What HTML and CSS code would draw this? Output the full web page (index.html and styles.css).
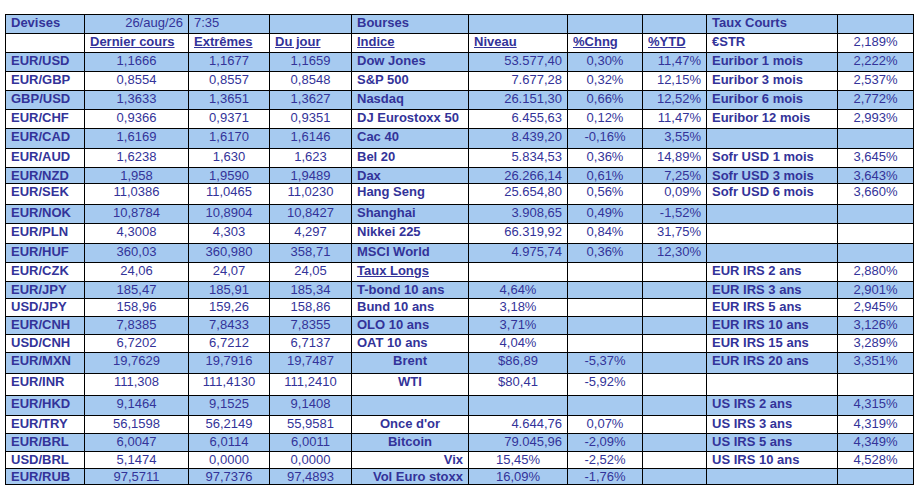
FILE: index.html
```html
<!DOCTYPE html>
<html lang="fr">
<head>
<meta charset="utf-8">
<title>Marchés</title>
<link rel="stylesheet" href="styles.css">
</head>
<body>
<table class="sheet">
  <colgroup>
    <col class="w79"><col class="w104"><col class="w81"><col class="w82"><col class="w117"><col class="w99"><col class="w75"><col class="w64"><col class="w131"><col class="w76">
  </colgroup>
  <tbody>
    <tr class="alt h19"><td class="b">Devises</td><td class="r">26/aug/26</td><td>7:35</td><td></td><td class="b">Bourses</td><td></td><td></td><td></td><td class="b">Taux Courts</td><td></td></tr>
    <tr class="h19"><td></td><td class="b u">Dernier cours</td><td class="b u">Extrêmes</td><td class="b u">Du jour</td><td class="b u">Indice</td><td class="b u">Niveau</td><td class="b u">%Chng</td><td class="b u">%YTD</td><td class="b">€STR</td><td class="c">2,189%</td></tr>
    <tr class="alt h19"><td class="b">EUR/USD</td><td class="c">1,1666</td><td class="c">1,1677</td><td class="c">1,1659</td><td class="b">Dow Jones</td><td class="r">53.577,40</td><td class="c">0,30%</td><td class="r">11,47%</td><td class="b">Euribor 1 mois</td><td class="c">2,222%</td></tr>
    <tr class="h19"><td class="b">EUR/GBP</td><td class="c">0,8554</td><td class="c">0,8557</td><td class="c">0,8548</td><td class="b">S&amp;P 500</td><td class="r">7.677,28</td><td class="c">0,32%</td><td class="r">12,15%</td><td class="b">Euribor 3 mois</td><td class="c">2,537%</td></tr>
    <tr class="alt h19"><td class="b">GBP/USD</td><td class="c">1,3633</td><td class="c">1,3651</td><td class="c">1,3627</td><td class="b">Nasdaq</td><td class="r">26.151,30</td><td class="c">0,66%</td><td class="r">12,52%</td><td class="b">Euribor 6 mois</td><td class="c">2,772%</td></tr>
    <tr class="h19"><td class="b">EUR/CHF</td><td class="c">0,9366</td><td class="c">0,9371</td><td class="c">0,9351</td><td class="b">DJ Eurostoxx 50</td><td class="r">6.455,63</td><td class="c">0,12%</td><td class="r">11,47%</td><td class="b">Euribor 12 mois</td><td class="c">2,993%</td></tr>
    <tr class="alt h20"><td class="b">EUR/CAD</td><td class="c">1,6169</td><td class="c">1,6170</td><td class="c">1,6146</td><td class="b">Cac 40</td><td class="r">8.439,20</td><td class="c">-0,16%</td><td class="r">3,55%</td><td></td><td></td></tr>
    <tr class="h19"><td class="b">EUR/AUD</td><td class="c">1,6238</td><td class="c">1,630</td><td class="c">1,623</td><td class="b">Bel 20</td><td class="r">5.834,53</td><td class="c">0,36%</td><td class="r">14,89%</td><td class="b">Sofr USD 1 mois</td><td class="c">3,645%</td></tr>
    <tr class="alt h16"><td class="b">EUR/NZD</td><td class="c">1,958</td><td class="c">1,9590</td><td class="c">1,9489</td><td class="b">Dax</td><td class="r">26.266,14</td><td class="c">0,61%</td><td class="r">7,25%</td><td class="b">Sofr USD 3 mois</td><td class="c">3,643%</td></tr>
    <tr class="h21"><td class="b">EUR/SEK</td><td class="c">11,0386</td><td class="c">11,0465</td><td class="c">11,0230</td><td class="b">Hang Seng</td><td class="r">25.654,80</td><td class="c">0,56%</td><td class="r">0,09%</td><td class="b">Sofr USD 6 mois</td><td class="c">3,660%</td></tr>
    <tr class="alt h19"><td class="b">EUR/NOK</td><td class="c">10,8784</td><td class="c">10,8904</td><td class="c">10,8427</td><td class="b">Shanghai</td><td class="r">3.908,65</td><td class="c">0,49%</td><td class="r">-1,52%</td><td></td><td></td></tr>
    <tr class="h20"><td class="b">EUR/PLN</td><td class="c">4,3008</td><td class="c">4,303</td><td class="c">4,297</td><td class="b">Nikkei 225</td><td class="r">66.319,92</td><td class="c">0,84%</td><td class="r">31,75%</td><td></td><td></td></tr>
    <tr class="alt h19"><td class="b">EUR/HUF</td><td class="c">360,03</td><td class="c">360,980</td><td class="c">358,71</td><td class="b">MSCI World</td><td class="r">4.975,74</td><td class="c">0,36%</td><td class="r">12,30%</td><td></td><td></td></tr>
    <tr class="h19"><td class="b">EUR/CZK</td><td class="c">24,06</td><td class="c">24,07</td><td class="c">24,05</td><td class="b u">Taux Longs</td><td></td><td></td><td></td><td class="b">EUR IRS 2 ans</td><td class="c">2,880%</td></tr>
    <tr class="alt h17"><td class="b">EUR/JPY</td><td class="c">185,47</td><td class="c">185,91</td><td class="c">185,34</td><td class="b">T-bond 10 ans</td><td class="c">4,64%</td><td></td><td></td><td class="b">EUR IRS 3 ans</td><td class="c">2,901%</td></tr>
    <tr class="h18"><td class="b">USD/JPY</td><td class="c">158,96</td><td class="c">159,26</td><td class="c">158,86</td><td class="b">Bund 10 ans</td><td class="c">3,18%</td><td></td><td></td><td class="b">EUR IRS 5 ans</td><td class="c">2,945%</td></tr>
    <tr class="alt h18"><td class="b">EUR/CNH</td><td class="c">7,8385</td><td class="c">7,8433</td><td class="c">7,8355</td><td class="b">OLO 10 ans</td><td class="c">3,71%</td><td></td><td></td><td class="b">EUR IRS 10 ans</td><td class="c">3,126%</td></tr>
    <tr class="h18"><td class="b">USD/CNH</td><td class="c">6,7202</td><td class="c">6,7212</td><td class="c">6,7137</td><td class="b">OAT 10 ans</td><td class="c">4,04%</td><td></td><td></td><td class="b">EUR IRS 15 ans</td><td class="c">3,289%</td></tr>
    <tr class="alt h21"><td class="b">EUR/MXN</td><td class="c">19,7629</td><td class="c">19,7916</td><td class="c">19,7487</td><td class="b c">Brent</td><td class="c">$86,89</td><td class="c">-5,37%</td><td></td><td class="b">EUR IRS 20 ans</td><td class="c">3,351%</td></tr>
    <tr class="h22"><td class="b">EUR/INR</td><td class="c">111,308</td><td class="c">111,4130</td><td class="c">111,2410</td><td class="b c">WTI</td><td class="c">$80,41</td><td class="c">-5,92%</td><td></td><td></td><td></td></tr>
    <tr class="alt h20"><td class="b">EUR/HKD</td><td class="c">9,1464</td><td class="c">9,1525</td><td class="c">9,1408</td><td></td><td></td><td></td><td></td><td class="b">US IRS 2 ans</td><td class="c">4,315%</td></tr>
    <tr class="h18"><td class="b">EUR/TRY</td><td class="c">56,1598</td><td class="c">56,2149</td><td class="c">55,9581</td><td class="b c">Once d'or</td><td class="r">4.644,76</td><td class="c">0,07%</td><td></td><td class="b">US IRS 3 ans</td><td class="c">4,319%</td></tr>
    <tr class="alt h18"><td class="b">EUR/BRL</td><td class="c">6,0047</td><td class="c">6,0114</td><td class="c">6,0011</td><td class="b c">Bitcoin</td><td class="r">79.045,96</td><td class="c">-2,09%</td><td></td><td class="b">US IRS 5 ans</td><td class="c">4,349%</td></tr>
    <tr class="h17"><td class="b">USD/BRL</td><td class="c">5,1474</td><td class="c">0,0000</td><td class="c">0,0000</td><td class="b r">Vix</td><td class="c">15,45%</td><td class="c">-2,52%</td><td></td><td class="b">US IRS 10 ans</td><td class="c">4,528%</td></tr>
    <tr class="alt h16"><td class="b">EUR/RUB</td><td class="c">97,5711</td><td class="c">97,7376</td><td class="c">97,4893</td><td class="b r">Vol Euro stoxx</td><td class="c">16,09%</td><td class="c">-1,76%</td><td></td><td></td><td></td></tr>
  </tbody>
</table>
</body>
</html>
```

FILE: styles.css
```css
body {
  margin: 0;
  background: #ffffff;
  font-family: "Liberation Sans", Arial, sans-serif;
}

.sheet {
  margin: 14px 0 0 5px;
  width: 909px;
  table-layout: fixed;
  border-collapse: separate;
  border-spacing: 0;
  border-top: 1px solid #000;
  border-left: 1px solid #000;
  font-size: 13px;
  line-height: 15px;
  color: #333399;
}

.sheet td {
  box-sizing: border-box;
  padding: 0 5px;
  border-right: 1px solid #000;
  border-bottom: 1px solid #000;
  vertical-align: top;
  white-space: nowrap;
  overflow: hidden;
  text-align: left;
}

.alt { background: #a6caf0; }

.h16 { height: 16px; }
.h17 { height: 17px; }
.h18 { height: 18px; }
.h19 { height: 19px; }
.h20 { height: 20px; }
.h21 { height: 21px; }
.h22 { height: 22px; }

.w79 { width: 79px; }
.w104 { width: 104px; }
.w81 { width: 81px; }
.w82 { width: 82px; }
.w117 { width: 117px; }
.w99 { width: 99px; }
.w75 { width: 75px; }
.w64 { width: 64px; }
.w131 { width: 131px; }
.w76 { width: 76px; }

.sheet td.b { font-weight: bold; }
.sheet td.u { text-decoration: underline; }
.sheet td.c { text-align: center; }
.sheet td.r { text-align: right; }
```
